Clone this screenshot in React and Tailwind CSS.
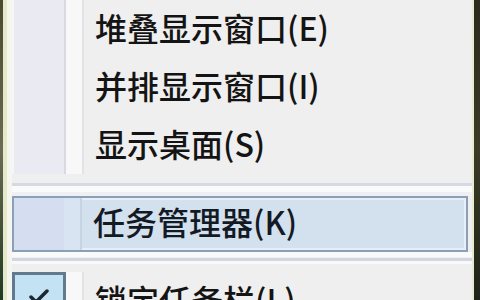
import { Check } from "lucide-react"

const font = { fontFamily: '"Noto Sans CJK SC", "Noto Sans", sans-serif' }

const Gutter = () => (
  <div className="flex h-full shrink-0">
    <div className="w-[2px] bg-[#f6f6f4]" />
    <div className="w-[50px] bg-[#eaeaf3]" />
    <div className="w-[2px] bg-[#d9d9df]" />
    <div className="w-[16px] bg-[#f8f8f8]" />
    <div className="w-[2px] bg-[#e3e3e6]" />
  </div>
)

const MenuItem = ({ label }) => (
  <div className="flex h-[58px] shrink-0">
    <Gutter />
    <div className="flex flex-1 items-center pb-[5px] pl-[11px] text-[32px] font-medium leading-none text-[#141414]">
      {label}
    </div>
  </div>
)

const App = () => {
  return (
    <div style={font} className="flex h-[300px] w-[480px] overflow-hidden bg-[#efefef]">
      {/* desktop edge + menu border */}
      <div className="w-[3px] bg-gradient-to-b from-[#4a4a30] via-[#6b6b55] to-[#1f3a24]" />
      <div className="w-[4px] bg-[#e6e9c8]" />
      <div className="w-[5px] bg-[#f5f6f0]" />

      <div className="flex flex-1 flex-col">
        <MenuItem label="堆叠显示窗口(E)" />
        <MenuItem label="并排显示窗口(I)" />
        <MenuItem label="显示桌面(S)" />

        {/* separator */}
        <div className="flex h-[22px] shrink-0 flex-col">
          <div className="h-[9px] bg-[#efeff0]" />
          <div className="h-[3px] bg-[#d6d8e2]" />
          <div className="h-[6px] bg-[#fafafa]" />
          <div className="h-[4px] bg-[#eef0f4]" />
        </div>

        {/* highlighted item */}
        <div className="mr-[4px] flex h-[56px] shrink-0 border-2 border-[#8d9fb5] bg-[#d3e1ef] shadow-[inset_0_0_0_2px_#e6eef8]">
          <div className="flex h-full shrink-0">
            <div className="w-[50px] bg-[#d5ddf0]" />
            <div className="w-[16px] bg-[#d8e4f1]" />
            <div className="w-[2px] bg-[#c5d3e3]" />
          </div>
          <div className="flex flex-1 items-center pb-[6px] pl-[11px] text-[32px] font-medium leading-none text-[#141a24]">
            任务管理器(K)
          </div>
        </div>

        {/* separator */}
        <div className="flex h-[20px] shrink-0 flex-col">
          <div className="h-[5px] bg-[#f8fafc]" />
          <div className="h-[1px] bg-[#eef0f2]" />
          <div className="h-[3px] bg-[#d2d6de]" />
          <div className="h-[3px] bg-[#f9f9f9]" />
          <div className="h-[8px] bg-[#efefef]" />
        </div>

        {/* checked item */}
        <div className="flex h-[58px] shrink-0">
          <div className="flex h-full w-[54px] shrink-0 items-start bg-[#eaeaf3]">
            <div className="flex h-[56px] w-[54px] justify-center border-[3px] border-[#62798f] bg-[#c3e3f4] pt-[10px]">
              <Check size={24} strokeWidth={3.5} className="text-[#1d2633]" />
            </div>
          </div>
          <div className="w-[16px] bg-[#f8f8f8]" />
          <div className="w-[2px] bg-[#e3e3e6]" />
          <div className="flex flex-1 items-center pb-[4px] pl-[11px] text-[32px] font-medium leading-none text-[#141414]">
            锁定任务栏(L)
          </div>
        </div>
      </div>

      <div className="w-[2px] bg-[#e8ebcf]" />
      <div className="w-[6px] bg-gradient-to-b from-[#2b2b1c] via-[#3a3a26] to-[#1f2418]" />
    </div>
  )
}

export default App
